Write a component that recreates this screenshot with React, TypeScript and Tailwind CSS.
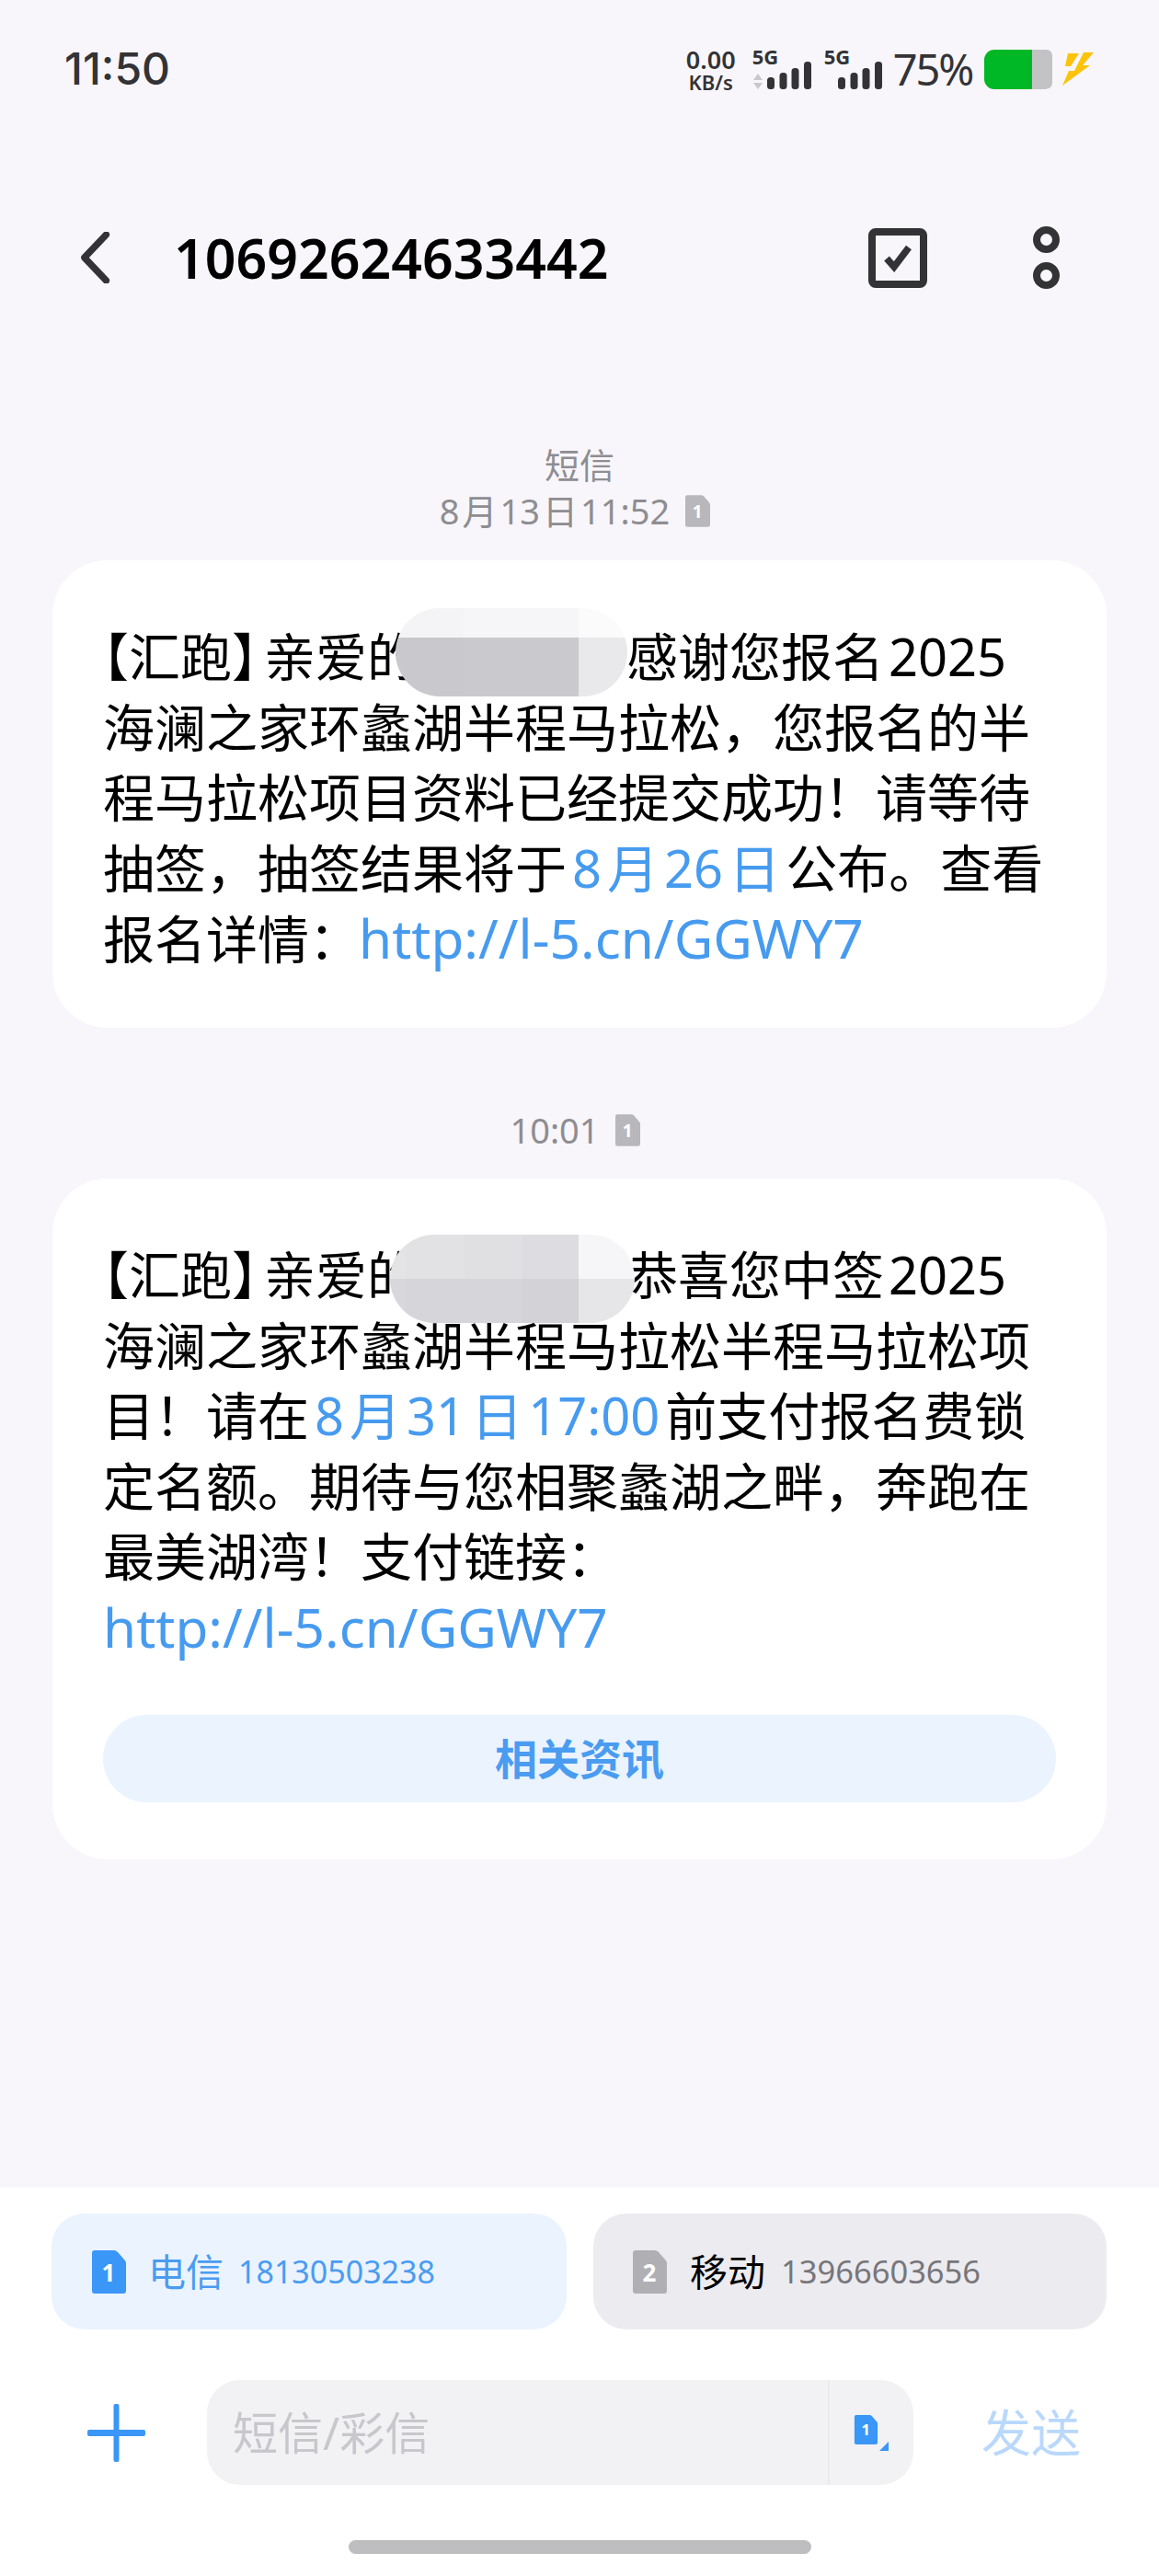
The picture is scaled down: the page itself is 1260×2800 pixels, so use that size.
import React from 'react';

const blue = 'text-[#479bef]';

// SIM card glyph with the corner cut off
const SimIcon: React.FC<{ n: string; color: string; w: number; h: number; size: number }> = ({ n, color, w, h, size }) => (
  <svg width={w} height={h} viewBox="0 0 37 47" className="shrink-0">
    <path d="M3 0H24Q26 0 28 2L35 10Q37 12 37 14V44Q37 47 34 47H3Q0 47 0 44V3Q0 0 3 0Z" fill={color} />
    <text x="18" y="24" dominantBaseline="central" textAnchor="middle" fill="#fff" fontSize={size} fontWeight="700" fontFamily="'Noto Sans', sans-serif">{n}</text>
  </svg>
);

const Bars: React.FC = () => (
  <svg width="48" height="30" viewBox="0 0 48 30" className="block">
    <rect x="0" y="17" width="8" height="13" rx="3.5" fill="#333336" />
    <rect x="13.5" y="12" width="8" height="18" rx="3.5" fill="#333336" />
    <rect x="26.5" y="7" width="8" height="23" rx="3.5" fill="#333336" />
    <rect x="40" y="0" width="8" height="30" rx="3.5" fill="#333336" />
  </svg>
);

const StatusBar: React.FC = () => (
  <div className="h-[150px] flex items-center justify-between pl-[70px] pr-[71px]">
    <span className="font-['Inter',sans-serif] text-[48px] font-medium text-[#333336]">11:50</span>
    <div className="flex items-center h-[50px] font-['Noto_Sans',sans-serif] text-[#333336]">
      <div className="w-[54px] flex flex-col items-center font-semibold leading-none">
        <span className="text-[27px] leading-[27px]">0.00</span>
        <span className="text-[22px] leading-[22px]">KB/s</span>
      </div>
      <div className="ml-[18px] w-[65px] relative h-[50px]">
        <span className="absolute left-0 top-[-1px] text-[22px] font-bold leading-[24px]">5G</span>
        <svg width="12" height="17" viewBox="0 0 12 17" className="absolute left-0 bottom-[3px]">
          <path d="M6 0L11 7H1ZM6 17L1 10H11Z" fill="#c9c8cc" />
        </svg>
        <div className="absolute right-[1px] bottom-[3px]"><Bars /></div>
      </div>
      <div className="ml-[13px] w-[63px] relative h-[50px]">
        <span className="absolute left-0 top-[-1px] text-[22px] font-bold leading-[24px]">5G</span>
        <div className="absolute right-0 bottom-[3px]"><Bars /></div>
      </div>
      <span className="ml-[12px] text-[47px] leading-none tracking-[-2.2px]">75%</span>
      <div className="ml-[13px] w-[74px] h-[43px] flex">
        <div className="w-[52px] bg-[#00b825] rounded-l-[11px]" />
        <div className="w-[16px] bg-[#c3c3c6]" />
        <div className="w-[6px] my-0 bg-[#c3c3c6] rounded-r-[10px] [clip-path:inset(0_0_0_0_round_0_6px_6px_0)]" />
      </div>
      <svg width="34" height="36" viewBox="0 0 34 36" className="ml-[11px]">
        <path d="M6 1H18L9 15H3Z" fill="#fcc30b" />
        <path d="M23 0H34L22 14H30L0 36L7 20H13Z" fill="#fcc30b" />
      </svg>
    </div>
  </div>
);

const Header: React.FC = () => (
  <div className="mt-[65px] h-[130px] flex items-center relative">
    <svg width="34" height="56" viewBox="0 0 34 56" className="ml-[86px] shrink-0">
      <path d="M30 3L5 28L30 53" fill="none" stroke="#333336" strokeWidth="7.5" strokeLinecap="round" strokeLinejoin="round" transform="matrix(0.95 0 0 1 1 0)" />
    </svg>
    <span className="ml-[69px] font-['Noto_Sans',sans-serif] text-[59px] font-semibold text-black leading-none">10692624633442</span>
    <div className="ml-auto flex items-center pr-[108px]">
      <svg width="64" height="65" viewBox="0 0 64 65">
        <rect x="4" y="4" width="56" height="57" rx="4" fill="none" stroke="#333336" strokeWidth="8" />
        <path d="M20 33L28 42L44 21" fill="none" stroke="#333336" strokeWidth="7.5" />
      </svg>
      <div className="ml-[115px] flex flex-col gap-[10px]">
        <div className="w-[29px] h-[29px] rounded-full border-[8px] border-[#333336]" />
        <div className="w-[29px] h-[29px] rounded-full border-[8px] border-[#333336]" />
      </div>
    </div>
  </div>
);

const Stamp: React.FC<{ children: React.ReactNode }> = ({ children }) => (
  <div className="flex items-center justify-center h-[50px] pr-[10px] text-[38px] text-[#8e8d91] leading-none">
    <span>{children}</span>
    <span className="ml-[17px]"><SimIcon n="1" color="#b8b7bb" w={27} h={35} size={26} /></span>
  </div>
);

// pixelated name cover laid over the bubble text
const Mosaic: React.FC<{ className: string; widths: number[]; cells: string[][] }> = ({ className, widths, cells }) => (
  <div className={`absolute overflow-hidden rounded-full flex flex-col ${className}`}>
    {cells.map((row, i) => (
      <div key={i} className="flex flex-1">
        {row.map((c, j) => (
          <div key={j} style={{ background: c, width: widths[j] }} />
        ))}
      </div>
    ))}
  </div>
);

const Lead: React.FC = () => (
  <>
    <span className="[font-feature-settings:'halt']">【</span>汇跑
    <span className="[font-feature-settings:'halt'] mr-[7px]">】</span>亲爱的
  </>
);

const D: React.FC<{ children: React.ReactNode }> = ({ children }) => <span className="mx-[6px]">{children}</span>;

const Url: React.FC<{ className?: string }> = ({ className = '' }) => (
  <span className={`${blue} text-[58.5px] ${className}`}>http://l-5.cn/GGWY7</span>
);

const Bubble1: React.FC = () => (
  <div className="mt-[29px] ml-[57px] w-[1146px] h-[508px] bg-white rounded-[60px] pt-[66px] pl-[55px] relative text-[56px] leading-[76.5px] text-black">
    <div className="whitespace-nowrap"><Lead /><span className="inline-block w-[226px]" />感谢您报名<span className="ml-[5px]">2025</span></div>
    <div className="whitespace-nowrap">海澜之家环蠡湖半程马拉松，您报名的半</div>
    <div className="whitespace-nowrap">程马拉松项目资料已经提交成功！请等待</div>
    <div className="whitespace-nowrap">抽签，抽签结果将于<span className={`${blue} ml-[6px] mr-[6px]`}>8<span className="ml-[6px]">月</span><D>26</D>日</span>公布。查看</div>
    <div className="whitespace-nowrap h-[76.5px]">报名详情：<Url className="ml-[-2px]" /></div>
    <Mosaic
      className="left-[373px] top-[52px] w-[252px] h-[96px]"
      widths={[74, 125, 53]}
      cells={[
        ['#f4f3f6', '#f6f5f8', '#fbfbfc'],
        ['#c9c8cc', '#cac9cd', '#e9e9eb'],
        ['#c9c8cc', '#cac9cd', '#e9e9eb'],
      ]}
    />
  </div>
);

const Bubble2: React.FC = () => (
  <div className="mt-[28px] ml-[57px] w-[1146px] h-[740px] bg-white rounded-[60px] pt-[66px] pl-[55px] pr-[55px] relative text-[56px] leading-[76.5px] text-black">
    <div className="whitespace-nowrap"><Lead /><span className="inline-block w-[226px]" />恭喜您中签<span className="ml-[5px]">2025</span></div>
    <div className="whitespace-nowrap">海澜之家环蠡湖半程马拉松半程马拉松项</div>
    <div className="whitespace-nowrap">目！请在<span className={`${blue} ml-[6px] mr-[6px]`}>8<span className="ml-[6px]">月</span><D>31</D>日<span className="ml-[6px]">17:00</span></span>前支付报名费锁</div>
    <div className="whitespace-nowrap">定名额。期待与您相聚蠡湖之畔，奔跑在</div>
    <div className="whitespace-nowrap">最美湖湾！支付链接：</div>
    <div className="whitespace-nowrap h-[76.5px]"><Url /></div>
    <div className="mt-[58px] h-[95px] bg-[#ebf3ff] rounded-full flex items-center justify-center text-[46px] font-semibold text-[#4a9cf0]">相关资讯</div>
    <Mosaic
      className="left-[367px] top-[61px] w-[266px] h-[96px]"
      widths={[17, 64, 63, 61, 61]}
      cells={[
        ['#e4e3e6', '#e2e1e4', '#e0dfe2', '#dddce0', '#f6f6f8'],
        ['#d8d7db', '#d6d5d9', '#d6d5d9', '#d3d2d6', '#e6e6e9'],
      ]}
    />
  </div>
);

const Composer: React.FC = () => (
  <div className="flex-1 bg-white flex flex-col pt-[28px]">
    <div className="flex pl-[56px] pr-[57px] gap-[29px]">
      <div className="w-[560px] h-[126px] rounded-[36px] bg-[#ebf3ff] flex items-center pl-[44px]">
        <SimIcon n="1" color="#3a96f7" w={37} h={47} size={26} />
        <span className="ml-[24px] text-[41px] text-[#4a9cf0] leading-none">电信</span>
        <span className="ml-[16px] text-[34px] text-[#4a9cf0] leading-none">18130503238</span>
      </div>
      <div className="flex-1 h-[126px] rounded-[36px] bg-[#ecebf0] flex items-center pl-[43px]">
        <SimIcon n="2" color="#b0afb3" w={37} h={47} size={26} />
        <span className="ml-[25px] text-[41px] text-black leading-none">移动</span>
        <span className="ml-[17px] text-[34.5px] text-[#77767a] leading-none">13966603656</span>
      </div>
    </div>
    <div className="mt-[55px] flex items-center pl-[95px]">
      <svg width="63" height="63" viewBox="0 0 63 63" className="shrink-0">
        <rect x="28.5" y="0" width="6" height="63" rx="2" fill="#3a96f7" />
        <rect x="0" y="28" width="63" height="7" rx="2" fill="#3a96f7" />
      </svg>
      <div className="ml-[67px] w-[768px] h-[114px] rounded-[36px] bg-[#f2f1f4] flex items-center">
        <span className="ml-[28px] text-[49px] text-[#c8c7cb] leading-none w-[647px]">短信/彩信</span>
        <div className="h-full border-l-[2px] border-[#ebeaed] relative w-[93px]">
          <span className="absolute left-[26px] top-[38px]"><SimIcon n="1" color="#3a96f7" w={27} h={32} size={24} /></span>
          <svg width="10" height="10" viewBox="0 0 10 10" className="absolute left-[54px] top-[67px]">
            <path d="M10 0V10H0Z" fill="#3a96f7" />
          </svg>
        </div>
      </div>
      <span className="ml-[74px] text-[54px] text-[#b9d8fb] leading-none">发送</span>
    </div>
    <div className="mt-[60px] mx-auto w-[503px] h-[15px] rounded-full bg-[#bebdc0]" />
  </div>
);

export default function App() {
  return (
    <div className="w-[1260px] h-[2800px] bg-[#f8f6fa] flex flex-col overflow-hidden font-['Noto_Sans','Noto_Sans_CJK_SC',sans-serif]">
      <StatusBar />
      <Header />
      <div className="h-[2033px] shrink-0">
        <div className="pt-[135px] flex justify-center h-[185px] text-[38px] leading-[50px] text-[#8e8d91]">短信</div>
        <Stamp>8<span className="mx-[3px]">月</span>13<span className="mx-[3px]">日</span>11:52</Stamp>
        <Bubble1 />
        <div className="mt-[86px]"><Stamp>10:01</Stamp></div>
        <Bubble2 />
      </div>
      <Composer />
    </div>
  );
}
